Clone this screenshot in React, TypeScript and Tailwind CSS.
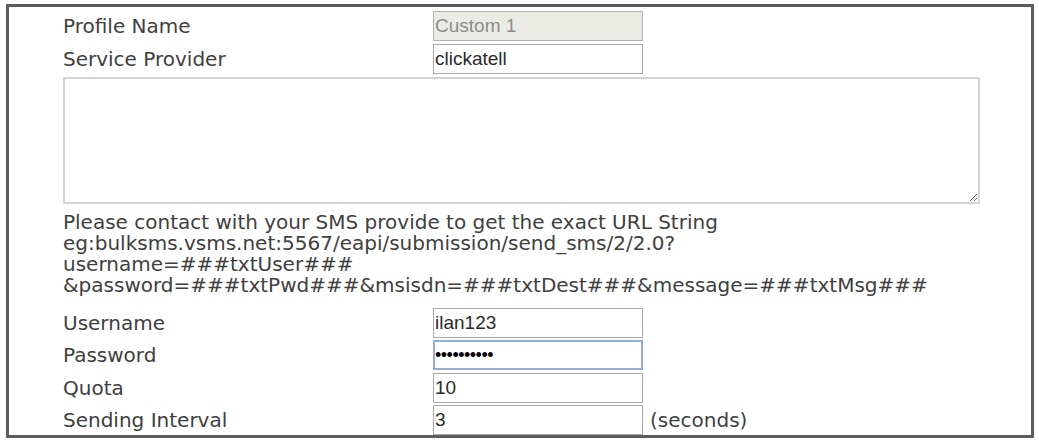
const labelFont = { fontFamily: '"DejaVu Sans", Verdana, sans-serif' };

const Row = ({
  label,
  children,
  className = "",
}: {
  label: string;
  children: React.ReactNode;
  className?: string;
}) => (
  <div className={`flex items-center h-[30px] ${className}`}>
    <div className="w-[370px] text-[20px] text-[#404040] leading-none">{label}</div>
    {children}
  </div>
);

const baseCls =
  "w-[210px] h-[30px] px-[1px] outline-none font-['Liberation_Sans',Arial,sans-serif]";
const inputCls = `${baseCls} border border-[#a9a9a9] text-[19px] text-[#2a2a2a]`;

export default function App() {
  return (
    <div className="w-[1039px] h-[440px] bg-white pt-[4px] pl-[6px] overflow-hidden" style={labelFont}>
      <div className="w-[1028px] h-[434px] border-[3px] border-[#5c5c5c] pl-[54px] pt-[4px]">
        <Row label="Profile Name">
          <input
            className={`${baseCls} border border-[#b4b4b0] bg-[#ebebe6] text-[19px] text-[#8c8c8c]`}
            defaultValue="Custom 1"
            readOnly
          />
        </Row>
        <Row label="Service Provider" className="mt-[3px]">
          <input className={inputCls} defaultValue="clickatell" />
        </Row>
        <textarea className="block mt-[3px] w-[917px] h-[127px] border-2 border-[#d4d4d4] bg-white outline-none" />
        <div className="mt-[8px] text-[20px] leading-[21px] text-[#404040]">
          <div>Please contact with your SMS provide to get the exact URL String</div>
          <div>eg:bulksms.vsms.net:5567/eapi/submission/send_sms/2/2.0?</div>
          <div>username=###txtUser###</div>
          <div>&amp;password=###txtPwd###&amp;msisdn=###txtDest###&amp;message=###txtMsg###</div>
        </div>
        <Row label="Username" className="mt-[12px]">
          <input className={inputCls} defaultValue="ilan123" />
        </Row>
        <Row label="Password" className="mt-[2px]">
          <input
            type="password"
            className={`${baseCls} border-2 border-[#93acd8] pl-0 text-black text-[18px] tracking-[-0.5px]`}
            defaultValue="ilan12345!"
          />
        </Row>
        <Row label="Quota" className="mt-[3px]">
          <input className={inputCls} defaultValue="10" />
        </Row>
        <Row label="Sending Interval" className="mt-[2px]">
          <input className={inputCls} defaultValue="3" />
          <span className="ml-[7px] text-[20px] text-[#404040] leading-none">(seconds)</span>
        </Row>
      </div>
    </div>
  );
}
